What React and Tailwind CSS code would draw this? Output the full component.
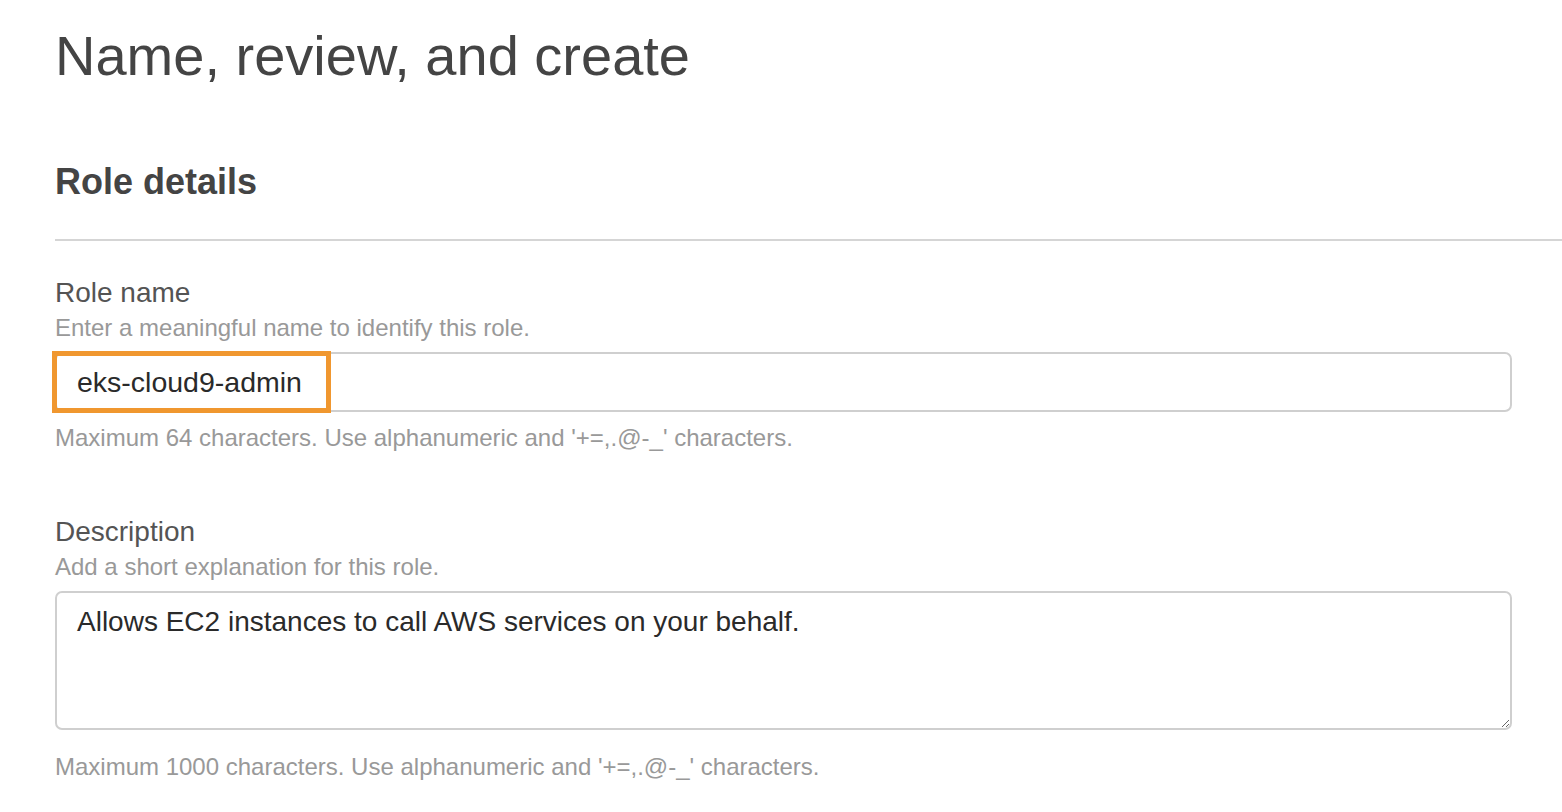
export default function App() {
  return (
    <div className="min-h-screen bg-white font-['Liberation_Sans',Arial,sans-serif] overflow-hidden">
      <div className="pl-[55px] pt-[24px]">
        <h1 className="text-[56px] leading-[64px] text-[#444]">Name, review, and create</h1>
        <h2 className="mt-[72px] text-[36px] leading-[44px] font-bold text-[#444]">Role details</h2>
      </div>
      <div className="ml-[55px] mt-[35px] h-[2px] bg-[#d5d5d5]" />

      <div className="pl-[55px] pr-[50px] pt-[34px]">
        {/* Role name */}
        <label className="block text-[28px] leading-[36px] text-[#545454]">Role name</label>
        <p className="mt-[1px] text-[24px] leading-[32px] text-[#999]">
          Enter a meaningful name to identify this role.
        </p>
        <div className="relative mt-[8px]">
          <input
            defaultValue="eks-cloud9-admin"
            className="w-full h-[60px] border-2 border-[#cfcfcf] rounded-[7px] px-[20px] text-[28.5px] text-[#2a2a2a] outline-none"
          />
          <div className="absolute left-[-3px] top-[-1px] w-[279px] h-[62px] border-[5px] border-[#f0972f] pointer-events-none" />
        </div>
        <p className="mt-[10px] text-[24px] leading-[32px] text-[#999]">
          Maximum 64 characters. Use alphanumeric and '+=,.@-_' characters.
        </p>

        {/* Description */}
        <label className="block mt-[60px] text-[28px] leading-[36px] text-[#545454]">Description</label>
        <p className="mt-[1px] text-[24px] leading-[32px] text-[#999]">
          Add a short explanation for this role.
        </p>
        <textarea
          defaultValue="Allows EC2 instances to call AWS services on your behalf."
          className="block w-full mt-[8px] h-[139px] border-2 border-[#cfcfcf] rounded-[7px] px-[20px] py-[12px] text-[28px] leading-[34px] text-[#2a2a2a] outline-none resize-y"
        />
        <p className="mt-[21px] text-[24px] leading-[32px] text-[#999]">
          Maximum 1000 characters. Use alphanumeric and '+=,.@-_' characters.
        </p>
      </div>
    </div>
  );
}
